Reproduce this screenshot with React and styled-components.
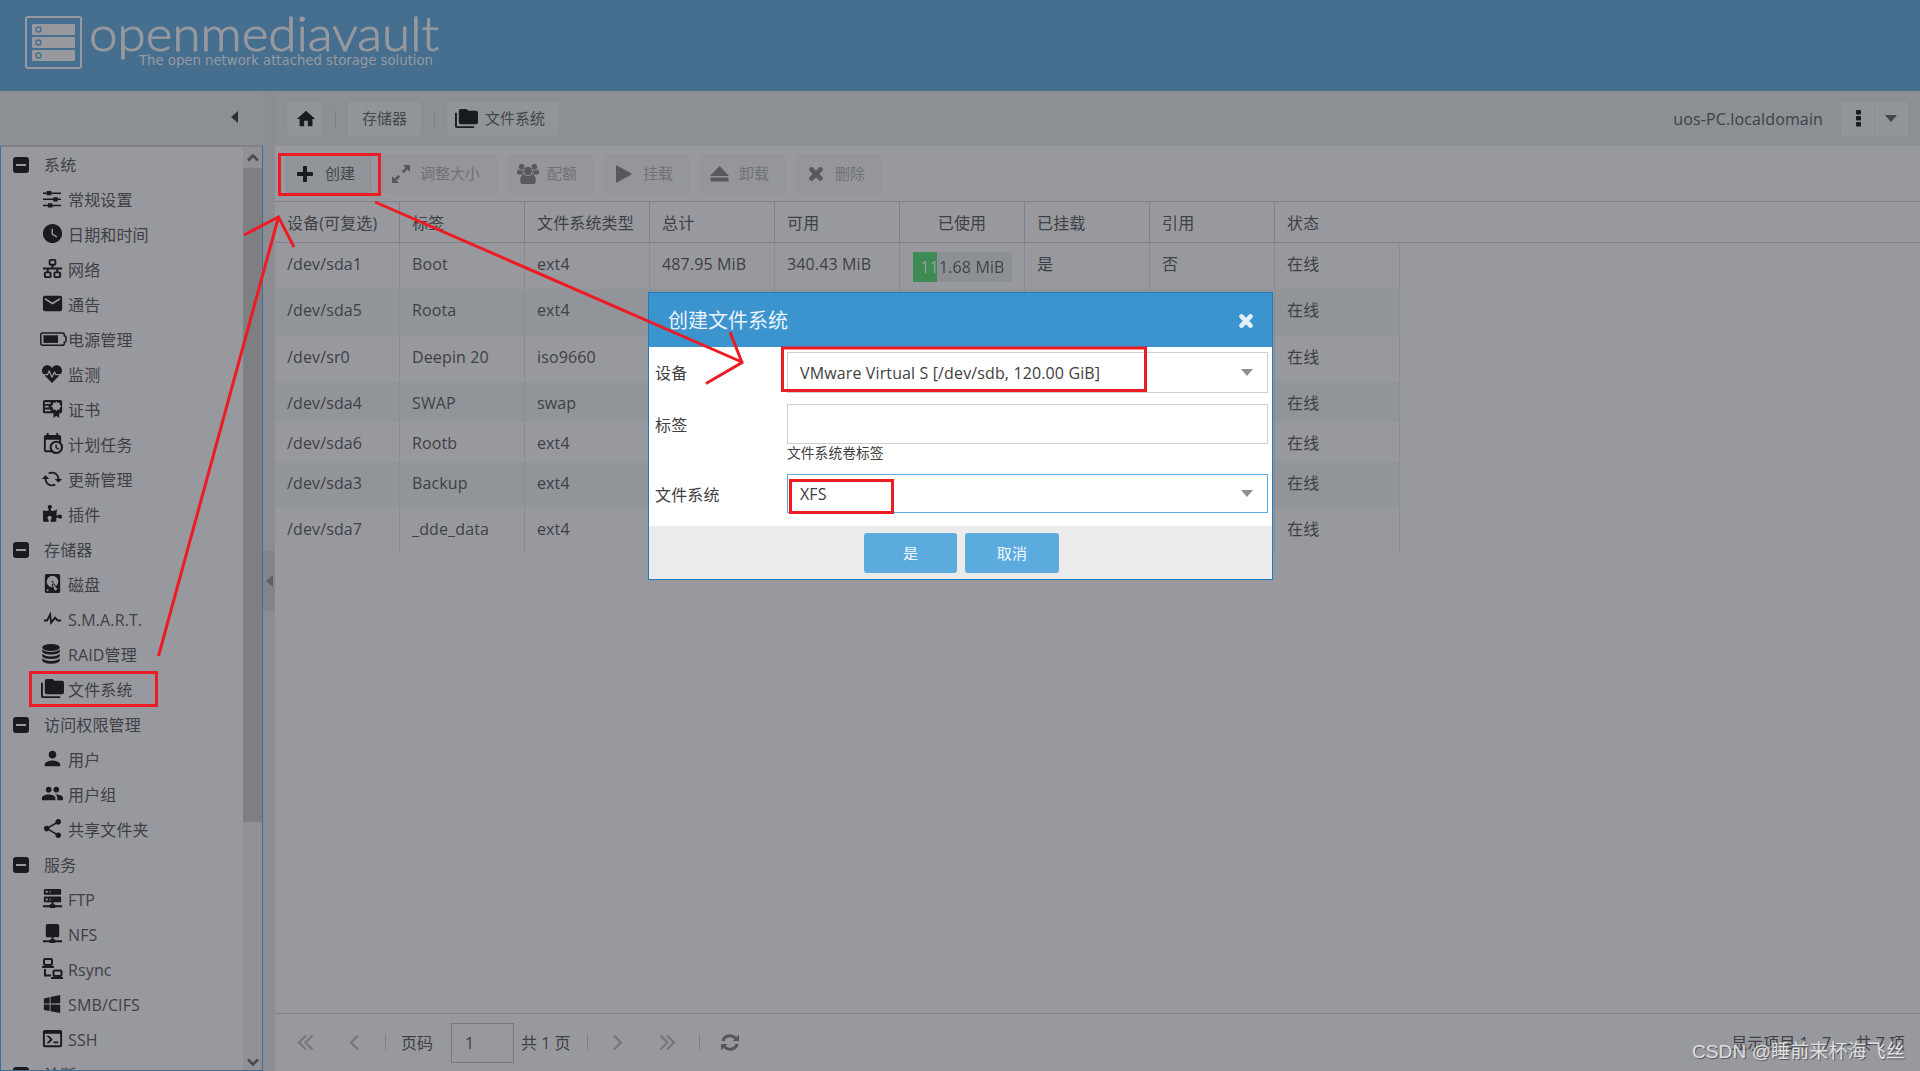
import React from "react";
import styled, { createGlobalStyle, css } from "styled-components";
import {
  MdWatchLater, MdEmail, MdCached, MdPerson, MdPeople, MdShare, MdHome,
} from "react-icons/md";
import { FaHeartbeat, FaPuzzlePiece } from "react-icons/fa";

const red = "#ed1c24";
const ink = "#191b20";
const text = "#3e4046";
const line = "#808287";

const Global = createGlobalStyle`
  * { box-sizing: border-box; }
  html, body { margin: 0; padding: 0; overflow: hidden; }
  body { font-family: "Open Sans", "Noto Sans CJK SC", sans-serif; font-size: 16px; letter-spacing: 0.13px; color: ${text}; }
`;

const Page = styled.div`
  position: relative;
  width: 1920px;
  height: 1071px;
  overflow: hidden;
  display: flex;
  flex-direction: column;
  background: #98999e;
`;
const Header = styled.header`
  height: 91px;
  flex: none;
  background: #466f8f;
  padding: 16px 0 0 25px;
`;
const Main = styled.div`
  flex: 1;
  display: flex;
  min-height: 0;
`;
const Side = styled.aside`
  width: 263px;
  display: flex;
  flex-direction: column;
`;
const SideHead = styled.div`
  height: 54px;
  flex: none;
  background: #8c8f93;
  display: flex;
  justify-content: flex-end;
  align-items: center;
  padding: 0 25px 2px 0;
`;
const TreePanel = styled.div`
  flex: 1;
  display: flex;
  min-height: 0;
  border: 1px solid #3d6f96;
  border-top: 2px solid ${line};
`;
const Tree = styled.div`
  flex: 1;
  overflow: hidden;
`;
const TreeRow = styled.div`
  height: 35px;
  padding-top: 1px;
  display: flex;
  align-items: center;
  line-height: 24px;
  white-space: nowrap;
`;
const Toggle = styled.span`
  width: 16px;
  height: 16px;
  margin: 0 15.5px 0 11.5px;
  border-radius: 3px;
  background: ${ink};
  display: flex;
  align-items: center;
  justify-content: center;
  &::after { content: ""; width: 10px; height: 2px; background: #98999e; }
`;
const LeafIcon = styled.span`
  width: 28px;
  height: 24px;
  margin: 0 2px 3px 37px;
  padding-left: ${(p) => Math.max(p.$shift || 0, 0)}px;
  padding-right: ${(p) => Math.max(-(p.$shift || 0), 0)}px;
  display: flex;
  align-items: center;
  justify-content: center;
  color: ${ink};
  svg { flex: none; display: block; }
`;
const Mirror = styled.span`
  transform: scaleX(-1);
`;
const ScrollBar = styled.div`
  width: 19px;
  background: #909196;
  display: flex;
  flex-direction: column;
  justify-content: space-between;
`;
const ScrollArrow = styled.div`
  height: 21px;
  padding-top: ${(p) => p.$pt || 0}px;
  display: flex;
  align-items: center;
  justify-content: center;
`;
const ScrollTrack = styled.div`
  flex: 1;
  &::before { content: ""; display: block; height: 654px; background: #7e7f83; }
`;
const Splitter = styled.div`
  width: 12px;
  background: #8c8d92;
  display: flex;
  flex-direction: column;
  padding-top: 460px;
`;
const SplitHandle = styled.div`
  height: 60px;
  background: #838489;
  display: flex;
  align-items: center;
  justify-content: center;
`;
const Content = styled.main`
  flex: 1;
  display: flex;
  flex-direction: column;
`;
const Crumbs = styled.div`
  height: 55px;
  flex: none;
  background: #8c8f93;
  display: flex;
  align-items: center;
  padding: 0 11px;
`;
const Btn = styled.div`
  height: 38px;
  width: ${(p) => p.$w}px;
  border: 1px solid ${(p) => (p.$off ? "#929398" : "#8a8c91")};
  border-radius: 4px;
  background: ${(p) => p.$bg || "#919499"};
  display: flex;
  align-items: center;
  padding-left: ${(p) => p.$pl || 0}px;
  gap: ${(p) => p.$gap || 0}px;
  font-size: 15px;
  letter-spacing: 0;
  line-height: 22px;
  color: ${(p) => (p.$off ? "#707176" : "#44464b")};
  white-space: nowrap;
  svg { flex: none; color: ${(p) => (p.$off ? "#57595e" : ink)}; }
`;
const BtnText = styled.span`
  padding-bottom: 2px;
`;
const Sep = styled.i`
  width: 1px;
  height: 17px;
  background: ${(p) => p.$c || "#7e8085"};
  margin: 0 ${(p) => p.$mr}px 0 ${(p) => p.$ml}px;
`;
const Host = styled.span`
  margin-left: auto;
  margin-right: 17px;
  line-height: 22px;
`;
const Split = styled.div`
  display: flex;
  ${Btn}:first-child { border-radius: 4px 0 0 4px; border-right: 0; }
  ${Btn}:last-child { border-radius: 0 4px 4px 0; }
`;
const Tools = styled.div`
  height: 55px;
  flex: none;
  display: flex;
  align-items: center;
  gap: 11px;
  padding: 0 11px;
`;
const gridCols = css`
  display: grid;
  grid-template-columns: repeat(9, 125px);
`;
const HeadRow = styled.div`
  ${gridCols}
  height: 42px;
  border-top: 1px solid ${line};
  border-bottom: 1px solid ${line};
`;
const HeadCell = styled.div`
  height: 40px;
  border-right: 1px solid ${(p) => (p.$last ? "transparent" : line)};
  padding-left: ${(p) => (p.$center ? 0 : 12)}px;
  text-align: ${(p) => (p.$center ? "center" : "left")};
  line-height: 43px;
  white-space: nowrap;
`;
const Row = styled.div`
  ${gridCols}
  width: 1125px;
  height: ${(p) => p.$h}px;
  background: ${(p) => (p.$alt ? "#919599" : "transparent")};
`;
const Cell = styled.div`
  border-right: 1px solid #8b8c91;
  padding: 9px 12px;
  line-height: 24px;
  white-space: nowrap;
`;
const Used = styled.div`
  width: 99px;
  height: 30px;
  margin-left: 1px;
  line-height: 31px;
  text-align: center;
  background: linear-gradient(90deg, #3f8b56 24px, #8c9094 24px);
`;
const UsedText = styled.span`
  display: block;
  background: linear-gradient(90deg, #98a59d 24px, ${text} 24px);
  background-clip: text;
  -webkit-background-clip: text;
  color: transparent;
`;
const Pager = styled.div`
  margin-top: auto;
  height: 58px;
  border-top: 1px solid ${line};
  display: flex;
  align-items: center;
  padding: 0 15px 0 22px;
  line-height: 24px;
  letter-spacing: 0;
  white-space: nowrap;
  svg { flex: none; }
`;
const PagerGap = styled.span`
  width: ${(p) => p.$w}px;
`;
const PageInput = styled.div`
  width: 63px;
  height: 40px;
  border: 1px solid #78797e;
  padding-left: 13px;
  line-height: 39px;
  margin: 0 7px 0 18px;
`;
const Total = styled.span`
  margin-left: auto;
`;

const Dialog = styled.section`
  position: absolute;
  left: 648px;
  top: 292px;
  width: 625px;
  height: 288px;
  border: 1px solid #1c7cc0;
  background: #fff;
  display: flex;
  flex-direction: column;
`;
const DialogHead = styled.div`
  height: 54px;
  flex: none;
  background: #3c94cf;
  color: #eaf3fa;
  font-size: 20px;
  letter-spacing: 0;
  line-height: 28px;
  display: flex;
  align-items: center;
  justify-content: space-between;
  padding: 2px 18px 0 19px;
`;
const Form = styled.div`
  flex: 1;
  padding: 5px 4px 0 6px;
`;
const Field = styled.div`
  display: grid;
  grid-template-columns: 132px 481px;
  margin-bottom: ${(p) => p.$mb || 0}px;
  color: #404040;
`;
const Label = styled.span`
  line-height: 42px;
  height: 39px;
`;
const Input = styled.div`
  height: ${(p) => p.$h || 41}px;
  line-height: 38px;
  border: 1px solid ${(p) => (p.$focus ? "#5dacdf" : "#cecece")};
  display: flex;
  align-items: center;
  justify-content: space-between;
  padding: 0 14px 0 12px;
`;
const Help = styled.div`
  grid-column: 2;
  font-size: 13.8px;
  letter-spacing: 0;
  line-height: 18px;
`;
const DialogFoot = styled.div`
  height: 53px;
  flex: none;
  background: #ebebeb;
  display: flex;
  justify-content: center;
  align-items: center;
  gap: 8px;
  padding: 1px 0 0 2px;
`;
const Action = styled.div`
  width: ${(p) => p.$w}px;
  height: 40px;
  border-radius: 3px;
  background: #5cabdf;
  color: #f3f8fc;
  font-size: 15px;
  line-height: 40px;
  text-align: center;
`;
const Marks = styled.svg`
  position: absolute;
  left: 0;
  top: 0;
  pointer-events: none;
`;
const Watermark = styled.div`
  position: absolute;
  right: 15px;
  top: 1037px;
  font-family: "Liberation Sans", "Noto Sans CJK SC", sans-serif;
  font-size: 19px;
  line-height: 30px;
  color: #dfe0e2;
  text-shadow: 1px 1px 1px #55565a;
  white-space: nowrap;
`;

const G = ({ d, s = 23, children }) => (
  <svg width={s} height={s} viewBox="0 0 24 24" fill="currentColor">
    {d && <path d={d} />}
    {children}
  </svg>
);
const paths = {
  lan: "M10,2C8.89,2 8,2.89 8,4V7C8,8.11 8.89,9 10,9H11V11H2V13H6V15H5C3.89,15 3,15.89 3,17V20C3,21.11 3.89,22 5,22H9C10.11,22 11,21.11 11,20V17C11,15.89 10.11,15 9,15H8V13H16V15H15C13.89,15 13,15.89 13,17V20C13,21.11 13.89,22 15,22H19C20.11,22 21,21.11 21,20V17C21,15.89 20.11,15 19,15H18V13H22V11H13V9H14C15.11,9 16,8.11 16,7V4C16,2.89 15.11,2 14,2H10M10,4H14V7H10V4M5,17H9V20H5V17M15,17H19V20H15V17Z",
  cal: "M15,13H16.5V15.82L18.94,17.23L18.19,18.53L15,16.69V13M19,8H5V19H9.67C9.24,18.09 9,17.07 9,16A7,7 0 0,1 16,9C17.07,9 18.09,9.24 19,9.67V8M5,21C3.89,21 3,20.1 3,19V5C3,3.89 3.89,3 5,3H6V1H8V3H16V1H18V3H19A2,2 0 0,1 21,5V11.1C22.24,12.36 23,14.09 23,16A7,7 0 0,1 16,23C14.09,23 12.36,22.24 11.1,21H5M16,11.15A4.85,4.85 0 0,0 11.15,16C11.15,18.68 13.32,20.85 16,20.85A4.85,4.85 0 0,0 20.85,16C20.85,13.32 18.68,11.15 16,11.15Z",
  disk: "M6,2H18A2,2 0 0,1 20,4V20A2,2 0 0,1 18,22H6A2,2 0 0,1 4,20V4A2,2 0 0,1 6,2M12,4A6,6 0 0,0 6,10C6,13.31 8.69,16 12.1,16L11.22,13.77C10.95,13.29 11.11,12.68 11.59,12.4L12.45,11.9C12.93,11.63 13.54,11.79 13.82,12.27L15.74,14.69C17.12,13.59 18,11.9 18,10A6,6 0 0,0 12,4M12,9A1,1 0 0,1 13,10A1,1 0 0,1 12,11A1,1 0 0,1 11,10A1,1 0 0,1 12,9M7,18A1,1 0 0,0 6,19A1,1 0 0,0 7,20A1,1 0 0,0 8,19A1,1 0 0,0 7,18M12.09,13.27L14.58,19.58L17.17,18.08L12.95,12.77L12.09,13.27Z",
  pulse: "M3,13H5.79L10.1,4.79L11.28,13.75L14.5,9.66L17.83,13H21V15H17L14.67,12.67L9.92,18.73L8.94,11.31L7,15H3V13Z",
  folders: "M22,4H14L12,2H6A2,2 0 0,0 4,4V16A2,2 0 0,0 6,18H22A2,2 0 0,0 24,16V6A2,2 0 0,0 22,4M2,6H0V11H0V20A2,2 0 0,0 2,22H20V20H2V6Z",
  server: "M13,18H14A1,1 0 0,1 15,19H22V21H15A1,1 0 0,1 14,22H10A1,1 0 0,1 9,21H2V19H9A1,1 0 0,1 10,18H11V16H4A1,1 0 0,1 3,15V11A1,1 0 0,1 4,10H20A1,1 0 0,1 21,11V15A1,1 0 0,1 20,16H13V18M4,2H20A1,1 0 0,1 21,3V7A1,1 0 0,1 20,8H4A1,1 0 0,1 3,7V3A1,1 0 0,1 4,2M9,6H10V4H9V6M9,14H10V12H9V14M5,4V6H7V4H5M5,12V14H7V12H5Z",
  nfs: "M13,18H14A1,1 0 0,1 15,19H22V21H15A1,1 0 0,1 14,22H10A1,1 0 0,1 9,21H2V19H9A1,1 0 0,1 10,18H11V16H7A2,2 0 0,1 5,14V4A2,2 0 0,1 7,2H17A2,2 0 0,1 19,4V14A2,2 0 0,1 17,16H13V18Z",
  windows: "M3,12V6.75L9,5.43V11.91L3,12M20,3V11.75L10,11.9V5.21L20,3M3,13L9,13.09V19.9L3,18.75V13M20,13.25V22L10,20.09V13.1L20,13.25Z",
  console: "M20,19V7H4V19H20M20,3A2,2 0 0,1 22,5V19A2,2 0 0,1 20,21H4A2,2 0 0,1 2,19V5C2,3.89 2.9,3 4,3H20M13,17V15H18V17H13M9.58,13L5.57,9H8.4L11.7,12.3C12.09,12.69 12.09,13.33 11.7,13.72L8.42,17H5.59L9.58,13Z",
};

const Sliders = () => (
  <G s={18}>
    <path d="M0 3.2h24v2H0zM0 11.4h24v2H0zM0 19.6h24v2H0zM5 1.4h6v5.6H5zM13.6 9.6h6v5.6h-6zM6.6 17.8h6v5.6h-6z" />
  </G>
);
const Battery = () => (
  <svg width="27" height="16" viewBox="0 0 27 16" fill="currentColor">
    <path d="M2.500 2h20q1.800 0 1.800 1.800V5q1.700 0 1.700 1v4.200q0 1-1.700 1v1.200q0 1.800-1.800 1.800h-20Q.8 14.200.8 12.400V3.800Q.8 2 2.500 2z" fill="none" stroke="currentColor" strokeWidth="1.500" />
    <path d="M3.500 4.300h14.500v7.600H3.500z" />
  </svg>
);
const Certificate = () => (
  <G>
    <path fillRule="evenodd" d="M4 3h16a2 2 0 0 1 2 2v10a2 2 0 0 1-2 2h-1v5l-3-2.500-3 2.500v-5H4a2 2 0 0 1-2-2V5a2 2 0 0 1 2-2zM4 5.500v1.800h6V5.500zM4 9.200V11h4V9.200zM4 13v1.800h6V13zM16 4.500l-1.300 1.700-2.200-.4v2.200l-2 1.600 2 1.600v2.200l2.200-.4 1.300 1.700 1.300-1.700 2.200.4v-2.200l1.800-1.600-1.800-1.600V5.800l-2.200.4z" />
  </G>
);
const Database = () => (
  <svg width="18" height="20" viewBox="0 0 18 20" fill="currentColor">
    <ellipse cx="9" cy="3.500" rx="8.800" ry="3.400" />
    <path d="M.2 5.300Q2.800 8 9 8t8.800-2.700v2.200Q17 10.300 9 10.500 1 10.300.2 7.500zM.2 9.800q2.600 2.700 8.800 2.700t8.800-2.700V12Q17 14.800 9 15 1 14.800.2 12zM.2 14.300Q2.800 17 9 17t8.800-2.700v2.200Q17 19.300 9 19.800 1 19.300.2 16.500z" />
  </svg>
);
const Rsync = () => (
  <svg width="21" height="21" viewBox="0 0 21 21" fill="none" stroke="currentColor" strokeWidth="2">
    <rect x="2" y="1" width="8" height="6" rx="1" />
    <path d="M0 9h12M3 11v6.500h6" />
    <rect x="11.500" y="12.500" width="8" height="5.500" rx="1" />
    <path d="M9 20h12" />
  </svg>
);
const Cross = ({ s, c }) => (
  <svg width={s} height={s} viewBox="0 0 14 14">
    <path d="M3 3l8 8M11 3l-8 8" stroke={c || "currentColor"} strokeWidth="4" strokeLinecap="round" />
  </svg>
);
const Down = ({ w = 12, c = "#8f8f8f" }) => (
  <svg width={w} height="7" viewBox="0 0 12 7"><path d="M0 0h12L6 7z" fill={c} /></svg>
);
const Left = ({ c, w = 7, h = 12 }) => (
  <svg width={w} height={h} viewBox="0 0 7 12"><path d="M7 0v12L0 6z" fill={c} /></svg>
);
const Chevron = ({ flip, double }) => (
  <svg width="17" height="17" viewBox="0 0 17 17" fill="none" stroke="#74757a" strokeWidth="2"
    transform={flip ? "scale(-1 1)" : undefined}>
    <path d={double ? "M9 1.500L2 8.500l7 7M15.500 1.500l-7 7 7 7" : "M12 1.500L5 8.500l7 7"} />
  </svg>
);

const tree = [
  ["系统"],
  ["常规设置", <Sliders />],
  ["日期和时间", <MdWatchLater size={23} />],
  ["网络", <G d={paths.lan} />],
  ["通告", <MdEmail size={23} />],
  ["电源管理", <Battery />, 3],
  ["监测", <FaHeartbeat size={20} />],
  ["证书", <Certificate />],
  ["计划任务", <G d={paths.cal} />],
  ["更新管理", <Mirror><MdCached size={22} /></Mirror>],
  ["插件", <FaPuzzlePiece size={19} />],
  ["存储器"],
  ["磁盘", <G d={paths.disk} />],
  ["S.M.A.R.T.", <G d={paths.pulse} />],
  ["RAID管理", <Database />, -2],
  ["文件系统", <G d={paths.folders} />],
  ["访问权限管理"],
  ["用户", <MdPerson size={23} />],
  ["用户组", <MdPeople size={23} />],
  ["共享文件夹", <MdShare size={23} />],
  ["服务"],
  ["FTP", <G d={paths.server} />],
  ["NFS", <G d={paths.nfs} />],
  ["Rsync", <Rsync />],
  ["SMB/CIFS", <G d={paths.windows} />],
  ["SSH", <G d={paths.console} />],
  ["诊断"],
];

const columns = ["设备(可复选)", "标签", "文件系统类型", "总计", "可用", "已使用", "已挂载", "引用", "状态"];
const rows = [
  [46, "/dev/sda1", "Boot", "ext4", "487.95 MiB", "340.43 MiB", "111.68 MiB", "是", "否", "在线"],
  [47, "/dev/sda5", "Roota", "ext4", "", "", "", "", "", "在线"],
  [46, "/dev/sr0", "Deepin 20", "iso9660", "", "", "", "", "", "在线"],
  [40, "/dev/sda4", "SWAP", "swap", "", "", "", "", "", "在线"],
  [40, "/dev/sda6", "Rootb", "ext4", "", "", "", "", "", "在线"],
  [46, "/dev/sda3", "Backup", "ext4", "", "", "", "", "", "在线"],
  [46, "/dev/sda7", "_dde_data", "ext4", "", "", "", "", "", "在线"],
];

const Logo = () => (
  <svg width="420" height="56" viewBox="25 16 420 56">
    <rect x="26" y="17" width="55" height="51" rx="2" fill="none" stroke="#98999e" strokeWidth="2" />
    {[24, 37, 50].map((y) => (
      <g key={y}>
        <rect x="32" y={y} width="43" height="11" rx="1" fill="#98999e" />
        <circle cx="38.500" cy={y + 5.500} r="2.500" fill="none" stroke="#466f8f" strokeWidth="1.500" />
      </g>
    ))}
    <text x="89" y="51" textLength="350" lengthAdjust="spacingAndGlyphs" fontFamily="Lato, sans-serif"
      fontWeight="300" letterSpacing="0" fontSize="48" fill="#98999e" stroke="#98999e" strokeWidth="0.900">openmediavault</text>
    <text x="139" y="65" textLength="294" lengthAdjust="spacingAndGlyphs" fontFamily="DejaVu Sans, sans-serif"
      letterSpacing="0" fontSize="13.500" fill="#98999e">The open network attached storage solution</text>
  </svg>
);

export default function App() {
  return (
    <Page>
      <Global />
      <Header><Logo /></Header>
      <Main>
        <Side>
          <SideHead><Left c="#2b2d32" /></SideHead>
          <TreePanel>
            <Tree>
              {tree.map(([label, icon, shift]) => (
                <TreeRow key={label}>
                  {icon ? <LeafIcon $shift={shift}>{icon}</LeafIcon> : <Toggle />}
                  {label}
                </TreeRow>
              ))}
            </Tree>
            <ScrollBar>
              <ScrollArrow>
                <svg width="12" height="9" viewBox="0 0 12 9" fill="none" stroke="#4a4b50" strokeWidth="2.600"><path d="M1 7.500l5-5 5 5" /></svg>
              </ScrollArrow>
              <ScrollTrack />
              <ScrollArrow $pt={5}>
                <svg width="12" height="9" viewBox="0 0 12 9" fill="none" stroke="#4a4b50" strokeWidth="2.600"><path d="M1 1.500l5 5 5-5" /></svg>
              </ScrollArrow>
            </ScrollBar>
          </TreePanel>
        </Side>
        <Splitter><SplitHandle><Left c="#5f6166" /></SplitHandle></Splitter>
        <Content>
          <Crumbs>
            <Btn $w={38} $pl={8}><MdHome size={22} /></Btn>
            <Sep $ml={11} $mr={11} />
            <Btn $w={75} $pl={14}><BtnText>存储器</BtnText></Btn>
            <Sep $ml={12} $mr={11} />
            <Btn $w={114} $pl={8} $gap={7}><G d={paths.folders} /><BtnText>文件系统</BtnText></Btn>
            <Host>uos-PC.localdomain</Host>
            <Split>
              <Btn $w={34} $pl={15}>
                <svg width="5" height="17" viewBox="0 0 5 17" fill="currentColor">
                  <rect width="5" height="4.500" rx="1" /><rect y="6" width="5" height="4.500" rx="1" /><rect y="12" width="5" height="4.500" rx="1" />
                </svg>
              </Btn>
              <Btn $w={35} $pl={10}><Down c="#44464b" /></Btn>
            </Split>
          </Crumbs>
          <Tools>
            <Btn $w={85} $pl={10} $gap={12}>
              <svg width="16" height="16" viewBox="0 0 16 16" fill="currentColor"><path d="M6 1q0-1 1-1h2q1 0 1 1v5h5q1 0 1 1v2q0 1-1 1h-5v5q0 1-1 1H7q-1 0-1-1v-5H1q-1 0-1-1V7q0-1 1-1h5z" /></svg>
              <BtnText>创建</BtnText>
            </Btn>
            <Btn $off $bg="#95969b" $w={115} $pl={9} $gap={10}>
              <svg width="18" height="18" viewBox="0 0 18 18" fill="currentColor"><path d="M18 0v7l-2.500-2.500-3.800 3.800-2-2 3.800-3.800L11 0zM0 18v-7l2.500 2.500 3.800-3.800 2 2-3.800 3.800L7 18z" /></svg>
              <BtnText>调整大小</BtnText>
            </Btn>
            <Btn $off $bg="#95969b" $w={85} $pl={8} $gap={8}>
              <svg width="22" height="20" viewBox="0 0 22 20" fill="currentColor">
                <circle cx="4.700" cy="2.800" r="2.800" /><circle cx="17.300" cy="2.800" r="2.800" /><circle cx="11" cy="7" r="4.200" />
                <path d="M0 9Q0 5.500 2 5.500q2.500 1.500 4.200.5Q5.500 8.500 7 10.500H2Q0 10.500 0 9zM22 9q0-3.500-2-3.500-2.500 1.500-4.200.5.700 2.500-.8 4.500h5q2 0 2-1.500zM3.200 17q0-6.500 3.800-6.500Q11 13.500 15 10.500q3.800 0 3.800 6.500 0 3-3 3H6.200q-3 0-3-3z" />
              </svg>
              <BtnText>配额</BtnText>
            </Btn>
            <Btn $off $bg="#95969b" $w={85} $pl={11} $gap={11}>
              <svg width="16" height="18" viewBox="0 0 16 18" fill="currentColor"><path d="M0 1v16q0 1 1 .6L15.500 9.500q.5-.5 0-1L1 .4Q0 0 0 1z" /></svg>
              <BtnText>挂载</BtnText>
            </Btn>
            <Btn $off $bg="#95969b" $w={85} $pl={9} $gap={10}>
              <svg width="19" height="16" viewBox="0 0 19 16" fill="currentColor"><path d="M9.500 0L19 10H0zM.5 11.500h18v4H.5z" /></svg>
              <BtnText>卸载</BtnText>
            </Btn>
            <Btn $off $bg="#95969b" $w={85} $pl={11} $gap={11}>
              <Cross s={16} />
              <BtnText>删除</BtnText>
            </Btn>
          </Tools>
          <HeadRow>
            {columns.map((c, i) => <HeadCell key={c} $center={i === 5} $last={i === 8}>{c}</HeadCell>)}
          </HeadRow>
          {rows.map(([h, ...cells], r) => (
            <Row key={cells[0]} $h={h} $alt={r % 2 === 1}>
              {cells.map((c, i) => (
                <Cell key={i}>{i === 5 && c ? <Used><UsedText>{c}</UsedText></Used> : c}</Cell>
              ))}
            </Row>
          ))}
          <Pager>
            <Chevron double />
            <PagerGap $w={32} />
            <Chevron />
            <Sep $c={line} $ml={22} $mr={15} />
            页码
            <PageInput>1</PageInput>
            共 1 页
            <Sep $c={line} $ml={17} $mr={21} />
            <Chevron flip />
            <PagerGap $w={33} />
            <Chevron double flip />
            <Sep $c={line} $ml={23} $mr={21} />
            <svg width="18" height="17" viewBox="0 0 18 17" fill="none" stroke="#55565b" strokeWidth="3">
              <path d="M2 7a7 6 0 0 1 12.500-2.800M16 10a7 6 0 0 1-12.500 2.800" />
              <path d="M18 .5V7h-6.500zM0 16.500V10h6.500z" fill="#55565b" stroke="none" />
            </svg>
            <Total>显示项目 1 - 7 — 共 7 项</Total>
          </Pager>
        </Content>
      </Main>

      <Dialog>
        <DialogHead>创建文件系统<Cross s={16} c="#e3f0f9" /></DialogHead>
        <Form>
          <Field $mb={11}>
            <Label>设备</Label>
            <Input>VMware Virtual S [/dev/sdb, 120.00 GiB]<Down /></Input>
          </Field>
          <Field $mb={12}>
            <Label>标签</Label>
            <Input $h={40} />
            <Help>文件系统卷标签</Help>
          </Field>
          <Field>
            <Label>文件系统</Label>
            <Input $h={39} $focus>XFS<Down /></Input>
          </Field>
        </Form>
        <DialogFoot><Action $w={93}>是</Action><Action $w={94}>取消</Action></DialogFoot>
      </Dialog>

      <Marks width="1920" height="1071" fill="none" stroke={red} strokeWidth="3">
        <rect x="279.500" y="154.500" width="100" height="40" />
        <rect x="30.500" y="672.500" width="126" height="33" />
        <rect x="782.500" y="348" width="363" height="42.500" />
        <rect x="790.500" y="480.500" width="102" height="32" />
        <path d="M158.500 656L278.500 217M244 235l34.500-18L294 247" />
        <path d="M375 202l368 160.500M730 332l12 30.500-36 21" />
      </Marks>
      <Watermark>CSDN @睡前来杯海飞丝</Watermark>
    </Page>
  );
}
